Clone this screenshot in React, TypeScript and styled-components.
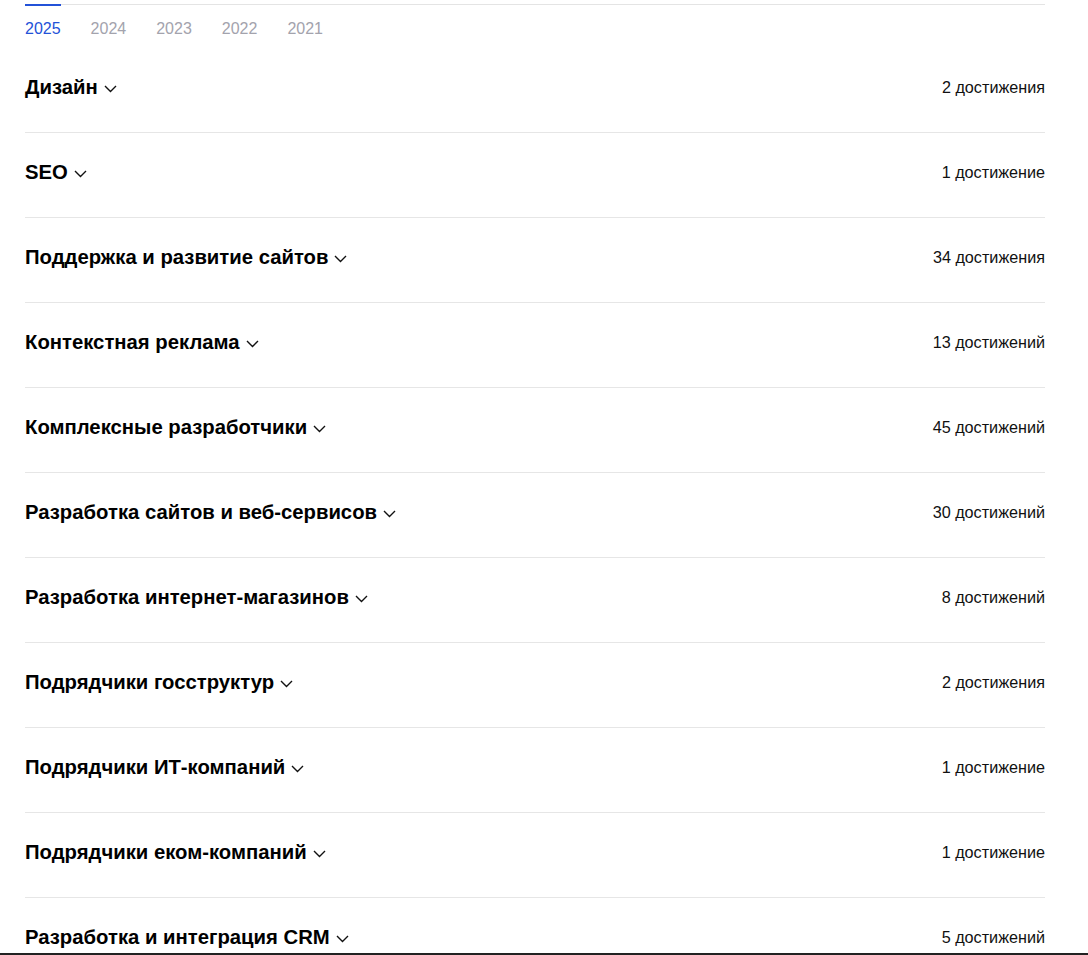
import * as React from "react";
import styled, { createGlobalStyle } from "styled-components";

const GlobalStyle = createGlobalStyle`
  html, body {
    margin: 0;
    padding: 0;
    background: #fff;
    font-family: "Liberation Sans", Arial, sans-serif;
    color: #000;
  }
`;

const Page = styled.div`
  padding: 4px 43px 0 25px;
  height: 951px;
  overflow: hidden;
`;

const Tabs = styled.div`
  display: flex;
  gap: 30px;
  border-top: 1px solid #e4e4e4;
`;

const Tab = styled.button<{ $active?: boolean }>`
  position: relative;
  padding: 15px 0 0;
  border: 0;
  background: none;
  font-family: inherit;
  font-size: 16px;
  line-height: 17px;
  color: ${(p) => (p.$active ? "#2352d8" : "#a3a3ad")};
  cursor: pointer;

  &::before {
    content: "";
    display: ${(p) => (p.$active ? "block" : "none")};
    position: absolute;
    top: -1px;
    left: 0;
    right: 0;
    height: 2px;
    background: #2352d8;
  }
`;

const List = styled.div`
  margin-top: 11px;
`;

const Row = styled.div`
  display: flex;
  align-items: center;
  justify-content: space-between;
  padding: 28px 0 34px;
  border-bottom: 1px solid #e6e6e6;
`;

const Title = styled.div`
  display: flex;
  align-items: center;
  gap: 6px;
  font-size: 20.3px;
  line-height: 22px;
  font-weight: 700;
`;

const Count = styled.div`
  font-size: 16.2px;
  line-height: 17px;
  color: #111;
`;

const BottomEdge = styled.div`
  position: fixed;
  left: 0;
  right: 0;
  bottom: 0;
  height: 2px;
  background: #222;
`;

const Chevron = () => (
  <svg width="13" height="8" viewBox="0 0 13 8" fill="none" style={{ marginTop: 3 }}>
    <path d="M1 1l5.5 5.5L12 1" stroke="#111" strokeWidth="1.4" />
  </svg>
);

const years = ["2025", "2024", "2023", "2022", "2021"];

const rows: [string, string][] = [
  ["Дизайн", "2 достижения"],
  ["SEO", "1 достижение"],
  ["Поддержка и развитие сайтов", "34 достижения"],
  ["Контекстная реклама", "13 достижений"],
  ["Комплексные разработчики", "45 достижений"],
  ["Разработка сайтов и веб-сервисов", "30 достижений"],
  ["Разработка интернет-магазинов", "8 достижений"],
  ["Подрядчики госструктур", "2 достижения"],
  ["Подрядчики ИТ-компаний", "1 достижение"],
  ["Подрядчики еком-компаний", "1 достижение"],
  ["Разработка и интеграция CRM", "5 достижений"],
];

const App = () => {
  const [year, setYear] = React.useState("2025");

  return (
    <>
      <GlobalStyle />
      <Page>
        <Tabs>
          {years.map((y) => (
            <Tab key={y} $active={y === year} onClick={() => setYear(y)}>
              {y}
            </Tab>
          ))}
        </Tabs>
        <List>
          {rows.map(([title, count]) => (
            <Row key={title}>
              <Title>
                {title}
                <Chevron />
              </Title>
              <Count>{count}</Count>
            </Row>
          ))}
        </List>
      </Page>
      <BottomEdge />
    </>
  );
};

export default App;
